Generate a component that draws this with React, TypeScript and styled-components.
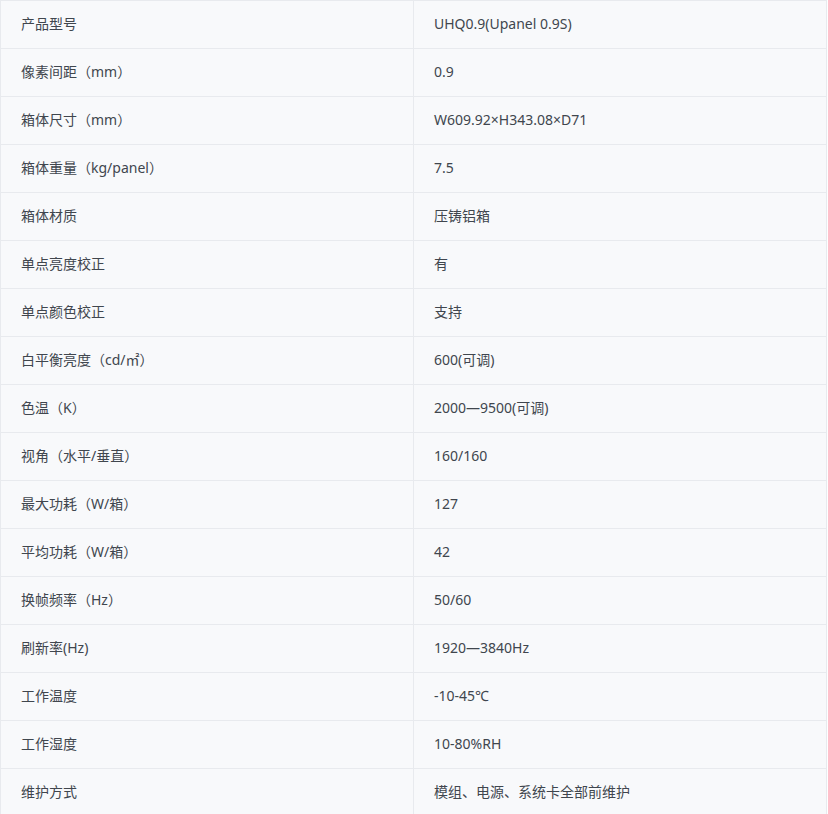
import React from "react";
import styled, { createGlobalStyle } from "styled-components";

const Global = createGlobalStyle`
  html, body { margin: 0; padding: 0; background: #ffffff; }
  body { font-family: "Noto Sans", "Noto Sans CJK SC", sans-serif; }
`;

const Table = styled.table`
  width: 827px;
  border-collapse: collapse;
  table-layout: fixed;
  background: #f8f9fb;
  font-size: 14px;
  color: #40464e;
`;

const Row = styled.tr`
  height: 48px;
`;

const Cell = styled.td`
  border: 1px solid #e8eaee;
  padding: 0 20px 3px;
  height: 47px;
  box-sizing: border-box;
  vertical-align: middle;
  font-family: "Noto Sans", "Noto Sans CJK SC", sans-serif;
  white-space: nowrap;
`;

const rows: [string, string][] = [
  ["产品型号", "UHQ0.9(Upanel 0.9S)"],
  ["像素间距（mm）", "0.9"],
  ["箱体尺寸（mm）", "W609.92×H343.08×D71"],
  ["箱体重量（kg/panel）", "7.5"],
  ["箱体材质", "压铸铝箱"],
  ["单点亮度校正", "有"],
  ["单点颜色校正", "支持"],
  ["白平衡亮度（cd/㎡）", "600(可调)"],
  ["色温（K）", "2000—9500(可调)"],
  ["视角（水平/垂直）", "160/160"],
  ["最大功耗（W/箱）", "127"],
  ["平均功耗（W/箱）", "42"],
  ["换帧频率（Hz）", "50/60"],
  ["刷新率(Hz)", "1920—3840Hz"],
  ["工作温度", "-10-45℃"],
  ["工作湿度", "10-80%RH"],
  ["维护方式", "模组、电源、系统卡全部前维护"],
];

export default function App() {
  return (
    <>
      <Global />
      <Table>
        <colgroup>
          <col style={{ width: 413 }} />
          <col />
        </colgroup>
        <tbody>
          {rows.map(([k, v]) => (
            <Row key={k}>
              <Cell>{k}</Cell>
              <Cell>{v}</Cell>
            </Row>
          ))}
        </tbody>
      </Table>
    </>
  );
}
